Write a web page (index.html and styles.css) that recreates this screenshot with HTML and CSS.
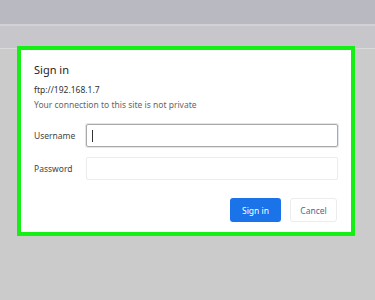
FILE: index.html
```html
<!DOCTYPE html>
<html lang="en">
<head>
    <meta charset="UTF-8">
    <meta name="viewport" content="width=device-width, initial-scale=1.0">
    <title>Sign in</title>
    <link rel="stylesheet" href="styles.css">
</head>
<body>
    <div class="tabbar"></div>
    <div class="toolbar"></div>

    <div class="page">
        <!-- hộp đăng nhập -->
        <div class="dialog">
            <h2>Sign in</h2>
            <p class="site">ftp://192.168.1.7</p>
            <p class="warn">Your connection to this site is not private</p>

            <div class="fields">
                <div class="row">
                    <label for="user">Username</label>
                    <div class="field focus"><span class="caret"></span></div>
                </div>
                <div class="row">
                    <label for="pass">Password</label>
                    <div class="field"></div>
                </div>
            </div>

            <div class="button-container">
                <button class="signin-btn">Sign in</button>
                <button class="cancel-btn">Cancel</button>
            </div>
        </div>
    </div>
</body>
</html>
```

FILE: styles.css
```css
body {
    margin: 0;
    padding: 0;
    font-family: "Noto Sans", Arial, sans-serif;
    background: #cbcbcb;
    color: #333;
    height: 300px;
    overflow: hidden;
}

.tabbar {
    height: 24px;
    background: #b9b9c1;
    border-bottom: 2px solid #d2d2d6;
}

.toolbar {
    height: 22px;
    background: #c7c7cb;
    border-bottom: 1px solid #d9d9db;
}

.page {
    height: 260px;
}

.dialog {
    box-sizing: border-box;
    width: 338px;
    height: 190px;
    margin: -3px 0 0 17px;
    background: #fff;
    border: 4px solid #16ef16;
    padding: 12px 13px 0 13px;
}

.dialog h2 {
    margin: 0;
    font-size: 11px;
    font-weight: normal;
    color: #222;
    line-height: 16px;
}

.dialog p {
    margin: 0;
    font-size: 8.5px;
    line-height: 15px;
}

.dialog .site {
    margin-top: 4px;
    color: #333;
}

.dialog .warn {
    color: #666;
}

.fields {
    display: flex;
    flex-direction: column;
    gap: 10px;
    margin-top: 12px;
}

.row {
    display: flex;
    align-items: center;
}

.row label {
    width: 52px;
    font-size: 8.5px;
    color: #444;
}

.field {
    box-sizing: border-box;
    width: 254px;
    height: 23px;
    border: 1px solid #ececec;
    border-radius: 2px;
    display: flex;
    align-items: center;
    padding-left: 5px;
}

.field.focus {
    border-color: #a9a9a9;
    box-shadow: 0 0 0 1px #dfe6f0;
}

.caret {
    width: 1px;
    height: 12px;
    background: #333;
}

.button-container {
    display: flex;
    justify-content: flex-end;
    gap: 9px;
    margin-top: 18px;
    padding-right: 1px;
}

.signin-btn, .cancel-btn {
    height: 24px;
    font-family: inherit;
    font-size: 8.5px;
    border-radius: 3px;
    cursor: pointer;
    padding: 0;
}

.signin-btn {
    width: 51px;
    background: #1a73e8;
    border: none;
    color: #fff;
}

.cancel-btn {
    width: 47px;
    background: #fff;
    border: 1px solid #ececec;
    color: #4a6894;
}
```
